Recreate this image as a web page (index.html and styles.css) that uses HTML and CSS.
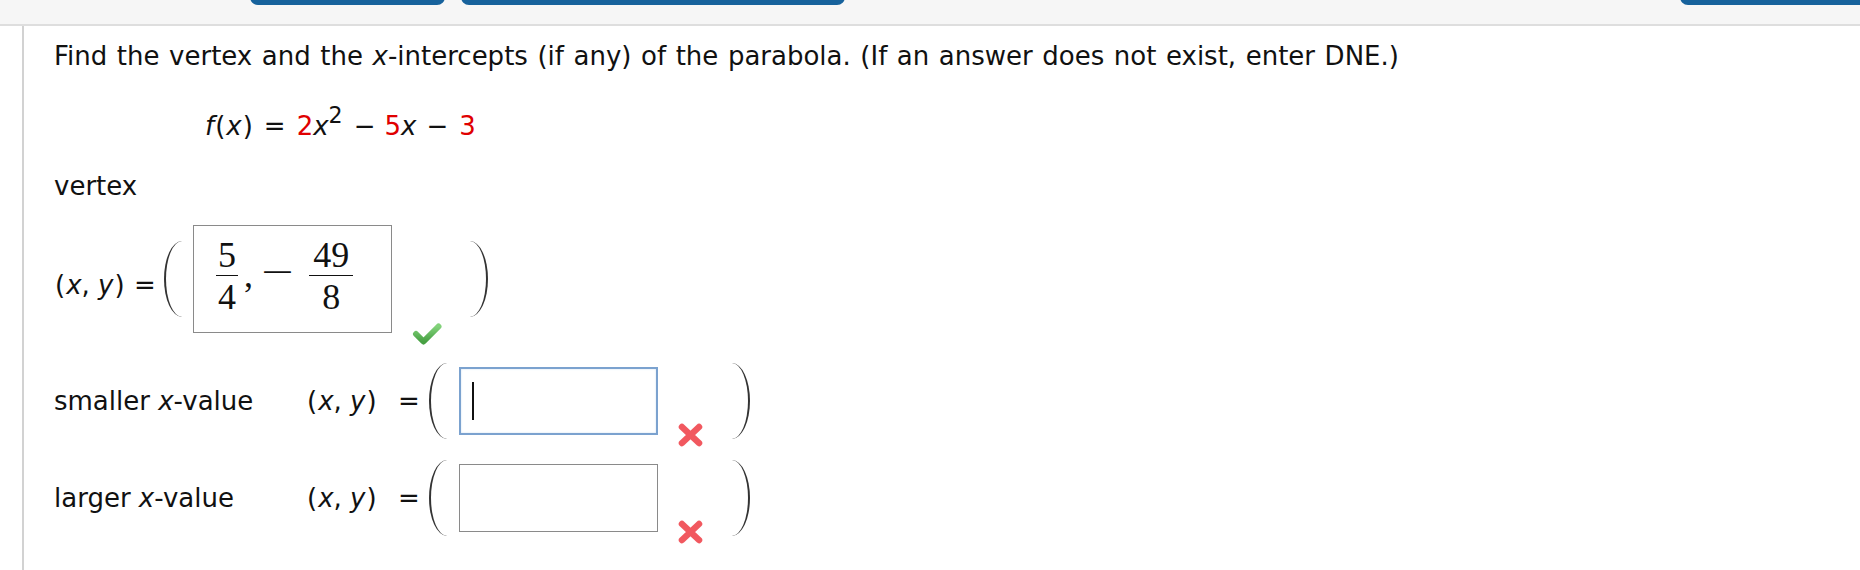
FILE: index.html
```html
<!DOCTYPE html>
<html>
<head>
<meta charset="utf-8">
<link rel="stylesheet" href="styles.css">
</head>
<body>
<div class="topbar">
  <span class="btn b1"></span>
  <span class="btn b2"></span>
  <span class="btn b3"></span>
</div>
<div class="main">
  <p class="prompt">Find the vertex and the <i>x</i>-intercepts (if any) of the parabola. (If an answer does not exist, enter DNE.)</p>
  <p class="formula"><i>f</i><span class="pp">(</span><i>x</i><span class="pp">)</span><span class="op">=</span><span class="red">2</span><i>x</i><sup>2</sup><span class="op m1">−</span><span class="red">5</span><i>x</i><span class="op">−</span><span class="red">3</span></p>
  <p class="label">vertex</p>
  <div class="vrow">
    <span class="vxy"><span class="pp">(</span><i>x</i>, <i>y</i><span class="pp">)</span> =</span>
    <span class="paren pl"></span>
    <div class="ansbox">
      <span class="frac"><span class="num">5</span><span class="den">4</span></span>
      <span class="comma">,</span>
      <span class="minus">−</span>
      <span class="frac f2"><span class="num">49</span><span class="den">8</span></span>
    </div>
    <svg class="check" width="30" height="24" viewBox="0 0 30 24">
      <defs>
        <linearGradient id="gck" x1="0" y1="0" x2="0" y2="1">
          <stop offset="0" stop-color="#82d27a"/>
          <stop offset="1" stop-color="#47a043"/>
        </linearGradient>
      </defs>
      <path d="M4 12 L11.5 19.5 L26.5 4.5" fill="none" stroke="url(#gck)" stroke-width="6" stroke-linecap="round" stroke-linejoin="round"/>
    </svg>
    <span class="paren pr"></span>
  </div>
  <div class="row r1">
    <span class="rlabel">smaller <i>x</i>-value</span>
    <span class="xy"><span class="pp">(</span><i>x</i>, <i>y</i><span class="pp">)</span></span>
    <span class="eq">=</span>
    <span class="paren pl"></span>
    <div class="input focus"><span class="caret"></span></div>
    <svg class="xmark" width="27" height="26" viewBox="0 0 27 26">
      <path d="M5 5 L22 21 M22 5 L5 21" fill="none" stroke="#f0464e" stroke-opacity="0.9" stroke-width="6.5" stroke-linecap="round"/>
    </svg>
    <span class="paren pr"></span>
  </div>
  <div class="row r2">
    <span class="rlabel">larger <i>x</i>-value</span>
    <span class="xy"><span class="pp">(</span><i>x</i>, <i>y</i><span class="pp">)</span></span>
    <span class="eq">=</span>
    <span class="paren pl"></span>
    <div class="input"></div>
    <svg class="xmark" width="27" height="26" viewBox="0 0 27 26">
      <path d="M5 5 L22 21 M22 5 L5 21" fill="none" stroke="#f0464e" stroke-opacity="0.9" stroke-width="6.5" stroke-linecap="round"/>
    </svg>
    <span class="paren pr"></span>
  </div>
</div>
</body>
</html>
```

FILE: styles.css
```css
* { box-sizing: border-box; }
html, body { margin: 0; padding: 0; background: #fff; }
body {
  font-family: "DejaVu Sans", Verdana, sans-serif;
  font-size: 26px;
  color: #111;
  height: 570px;
  overflow: hidden;
}
i { font-style: italic; }
.pp { margin: 0 1px; }

.topbar {
  height: 26px;
  background: #f6f6f6;
  border-bottom: 2px solid #dedede;
  display: flex;
  align-items: flex-end;
  overflow: hidden;
}
.btn {
  flex: none;
  height: 40px;
  margin-bottom: 19px;
  border: 5px solid #17629c;
  border-radius: 8px;
  background: #fff;
}
.b1 { margin-left: 250px; width: 195px; }
.b2 { margin-left: 16px; width: 384px; }
.b3 { margin-left: 835px; width: 300px; }

.main {
  margin-left: 22px;
  border-left: 2px solid #d2d2d2;
  padding: 15px 0 0 30px;
  height: 544px;
}
.main p { margin: 0; line-height: 30px; height: 30px; white-space: nowrap; }
.prompt { word-spacing: 1.3px; }
.formula { margin-top: 40px !important; padding-left: 151px; }
.formula .op { margin: 0 11px 0 10px; }
.formula .op.m1 { margin: 0 9px 0 12px; }
.formula sup { font-size: 0.85em; line-height: 0; vertical-align: 0.55em; margin-right: -1px; }
.red { color: #e00000; }
.label { margin-top: 30px !important; }

.vrow {
  margin-top: 23px;
  height: 110px;
  display: flex;
  align-items: center;
}
.vxy { flex: none; width: 110px; line-height: 30px; margin-top: 12px; white-space: nowrap; }

.paren {
  flex: none;
  width: 18px;
  height: 76px;
}
.pl {
  border-left: 2.5px solid #333;
  border-radius: 18px 0 0 18px / 38px 0 0 38px;
}
.pr {
  border-right: 2.5px solid #333;
  border-radius: 0 18px 18px 0 / 0 38px 38px 0;
}
.ansbox {
  flex: none;
  margin-left: 11px;
  width: 199px;
  height: 108px;
  border: 1.5px solid #8a8a8a;
  display: flex;
  align-items: center;
  padding-left: 22px;
  font-family: "Liberation Serif", "Times New Roman", serif;
  font-size: 36px;
  color: #111;
}
.frac {
  display: inline-flex;
  flex-direction: column;
  align-items: center;
  line-height: 32px;
  margin-bottom: 6px;
}
.num { padding: 0 2px 4.5px; border-bottom: 1.5px solid #111; }
.den { padding-top: 5px; }
.f2 .num { padding: 0 4px 4.5px; }
.comma { line-height: 32px; margin: 0 0 8px 6px; }
.minus {
  display: inline-block;
  line-height: 32px;
  margin: 0 0 14px 14px;
  transform: scaleX(1.6);
}
.f2 { margin-left: 22px; }
.check { flex: none; margin-left: 20px; margin-top: 109px; }
.vrow .pr { margin-left: 28px; }

.row {
  height: 80px;
  display: flex;
  align-items: center;
}
.r1 { margin-top: 27px; }
.r2 { margin-top: 17px; }
.rlabel { flex: none; width: 252px; line-height: 30px; white-space: nowrap; }
.xy { flex: none; width: 92px; line-height: 30px; white-space: nowrap; }
.eq { flex: none; width: 31px; line-height: 30px; }
.input {
  flex: none;
  margin-left: 12px;
  width: 199px;
  height: 68px;
  border: 1.5px solid #8a8a8a;
  background: #fff;
  display: flex;
  align-items: center;
}
.input.focus {
  border: 2px solid #7ba2cf;
  box-shadow: inset 0 0 2px #c9dcf0;
}
.caret { display: block; width: 2px; height: 38px; background: #111; margin-left: 11px; }
.xmark { flex: none; margin-left: 19px; margin-top: 67px; }
.row .pr { margin-left: 28px; }
```
